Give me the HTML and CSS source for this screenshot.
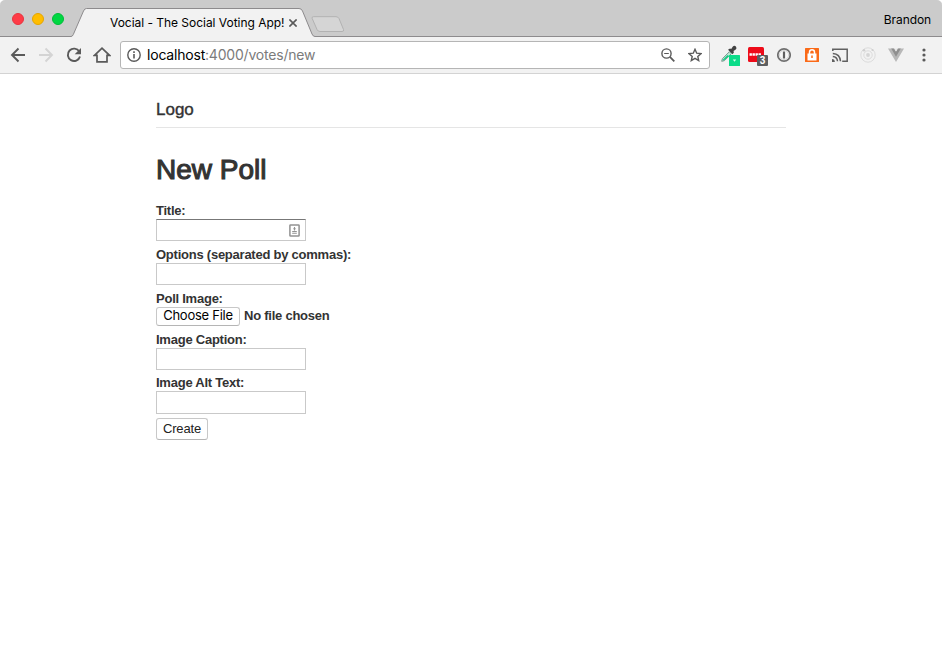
FILE: index.html
```html
<!DOCTYPE html>
<html lang="en">
<head>
<meta charset="utf-8">
<title>Vocial - The Social Voting App!</title>
<link rel="stylesheet" href="styles.css">
</head>
<body>
<div class="window">
  <header class="tabstrip">
    <div class="lights"><i class="light red"></i><i class="light amber"></i><i class="light green"></i></div>
    <div class="tab">
      <svg class="tab-shape" width="246" height="37" viewBox="0 0 246 37"><path d="M0 37V36.500Q1.500 36.500 2.300 34.500L12.500 11Q13.500 8.500 15.500 8.500H228Q230.500 8.500 231.500 11L241 34Q242 36.500 244 36.500V37Z" fill="#f2f2f2"/><path d="M0 36.500Q1.500 36.500 2.300 34.500L12.500 11Q13.500 8.500 15.500 8.500H228Q230.500 8.500 231.500 11L241 34Q242 36.500 244 36.500" fill="none" stroke="#8d8b8d"/></svg>
      <span class="tab-title">Vocial - The Social Voting App!</span>
      <svg class="tab-close" width="8" height="8" viewBox="0 0 8 8"><path d="M.4.4 7.600 7.600M7.600.4.4 7.600" stroke="#5a5a5a" stroke-width="1.600"/></svg>
    </div>
    <svg class="new-tab" width="34" height="17" viewBox="0 0 34 17"><path d="M2.500.7H25Q27 .7 28 2.500L32.500 13.500Q33.300 15.500 31 15.500H9Q7 15.500 6 13.500L1.200 2.500Q.5.7 2.500.7Z" fill="#d5d5d5" stroke="#b2b2b2"/></svg>
    <span class="profile">Brandon</span>
  </header>
  <nav class="toolbar">
    <div class="nav-icons">
      <svg width="16" height="16" viewBox="0 0 16 16"><path d="M15 8H2.500M8.500 1.500 2 8l6.500 6.500" fill="none" stroke="#5a5a5a" stroke-width="1.900"/></svg>
      <svg width="16" height="16" viewBox="0 0 16 16"><path d="M1 8h12.500M7.500 1.500 14 8l-6.500 6.500" fill="none" stroke="#d4d4d4" stroke-width="1.900"/></svg>
      <svg width="16" height="16" viewBox="0 0 16 16"><path d="M13.300 4.500A6.200 6.200 0 1 0 14 9.500" fill="none" stroke="#5a5a5a" stroke-width="1.900"/><path d="M15 1v6.300H8.700Z" fill="#5a5a5a"/></svg>
      <svg width="18" height="16" viewBox="0 0 18 16"><path d="M1.500 8.300 9 1.200l7.500 7.100H14v6.500H4V8.300Z" fill="none" stroke="#5a5a5a" stroke-width="1.700"/></svg>
    </div>
    <div class="address">
      <svg width="14" height="14" viewBox="0 0 14 14"><circle cx="7" cy="7" r="6.200" fill="none" stroke="#5a5a5a" stroke-width="1.400"/><path d="M7 6v4.500M7 3.300v1.600" stroke="#5a5a5a" stroke-width="1.600"/></svg>
      <span class="url"><b>localhost</b>:4000/votes/new</span>
      <svg class="magnifier" width="14" height="14" viewBox="0 0 14 14"><circle cx="5.500" cy="5.500" r="4.600" fill="none" stroke="#5a5a5a" stroke-width="1.400"/><path d="M3.200 5.500h4.600" stroke="#5a5a5a"/><path d="m8.900 8.900 4.400 4.400" stroke="#5a5a5a" stroke-width="1.800"/></svg>
      <svg width="14" height="14" viewBox="0 0 14 14"><path d="m7 1.300 1.700 3.900 4.300.4-3.200 2.800.9 4.200L7 10.400l-3.700 2.200.9-4.200L1 5.600l4.300-.4Z" fill="none" stroke="#5a5a5a" stroke-width="1.400"/></svg>
    </div>
    <div class="extensions">
      <svg width="20" height="22" viewBox="0 0 20 22"><path d="m1.700 16.300.7-2.600 7-7 2 2-7 7Z" fill="#bfe9d7" stroke="#7c9790"/><path d="m2.500 15 5-5 1.500 1-5.200 4.600Z" fill="#12ce86"/><path d="m8 4.700 2-1.300 1.200.6 1.500-2.200q1.500-1.800 3.200-.3 1.500 1.800-.4 3.200l-2 1.400.4 1.400-1.300 1.800Z" fill="#424242"/><rect x="9" y="10" width="11" height="11" rx=".5" fill="#0bdc89"/><path d="M12.800 14.500h3.400l-1.700 2.300Z" fill="#d5ffed"/></svg>
      <svg class="ext-red" width="20" height="22" viewBox="0 0 20 22"><rect y="2" width="16" height="15" rx="1.500" fill="#ed0b19"/><path d="M1.500 9.500h12" stroke="#fff" stroke-width="2.400" stroke-dasharray="2.400 .6"/><rect x="9" y="10" width="11" height="11" rx="1" fill="#5c5e60"/><text class="badge-text" x="11.700" y="19.300">3</text></svg>
      <svg class="ext-key" width="14" height="22" viewBox="0 0 14 22"><circle cx="7" cy="10" r="6.200" fill="#f8f8f8" stroke="#707070" stroke-width="1.700"/><circle cx="7" cy="10" r="4.600" fill="none" stroke="#d7d7d7"/><path d="M7 6.500v7" stroke="#606060" stroke-width="2.200"/></svg>
      <svg class="ext-lock" width="14" height="22" viewBox="0 0 14 22"><rect y="3" width="14" height="14" rx=".5" fill="#fa6a18"/><path d="M4.500 9V7.200a2.500 2.500 0 0 1 5 0V9" fill="none" stroke="#fff" stroke-width="1.500"/><rect x="2.500" y="8.500" width="9" height="7" fill="#fff"/><path d="M7 10.500v2.500" stroke="#fa6a18" stroke-width="1.500"/></svg>
      <svg class="ext-cast" width="16" height="22" viewBox="0 0 16 22"><path d="M.8 6V4.300h14.400v11.900h-5M.8 8.500q7.200.5 7.700 7.700M.8 11.500q4.400.3 4.700 4.700" fill="none" stroke="#606060" stroke-width="1.500"/><path d="M0 14q2.800 0 2.800 3H0Z" fill="#606060"/></svg>
      <svg class="ext-faded" width="16" height="22" viewBox="0 0 16 22"><g fill="none" stroke="#dcdcdc"><circle cx="8" cy="10" r="7.200"/><circle cx="8" cy="10" r="4.200"/></g><circle cx="8" cy="10" r="1.900" fill="#d5d5d5"/><circle cx="4" cy="5.300" r="1.300" fill="#cfcfcf"/><circle cx="12.500" cy="5" r="1.100" fill="#cfcfcf"/></svg>
      <svg class="ext-faded" width="16" height="22" viewBox="0 0 16 22"><path d="M0 3.500h5.500L8 7.500l2.500-4H16L8 17Z" fill="#b8b8b8"/><path d="M3.200 3.500h3L8 6.500l1.800-3h3L8 11.700Z" fill="#8f8f8f"/><path d="M6.200 3.500h3.600L8 6.500Z" fill="#e7e7e7"/></svg>
      <svg class="menu" width="4" height="22" viewBox="0 0 4 22"><g fill="#5a5a5a"><circle cx="2" cy="5" r="1.600"/><circle cx="2" cy="10" r="1.600"/><circle cx="2" cy="15" r="1.600"/></g></svg>
    </div>
  </nav>
  <main class="page">
    <div class="site-header">Logo</div>
    <h1>New Poll</h1>
    <form>
      <label class="field title-field">Title:<span class="input"><svg width="11" height="13" viewBox="0 0 11 13"><rect x=".9" y=".9" width="9.200" height="11.200" rx=".7" fill="#fff" stroke="#929292" stroke-width="1.500"/><path d="M5.500 3v3.500M4.300 4.700h2.400M3.200 7.500h4.600M3.200 9.300h4.600" stroke="#929292" stroke-width="1.100"/></svg></span></label>
      <label class="field">Options (separated by commas):<span class="input"></span></label>
      <div class="field file-field">Poll Image:<div class="file-row"><button type="button" class="file-button">Choose File</button><span>No file chosen</span></div></div>
      <label class="field caption-field">Image Caption:<span class="input"></span></label>
      <label class="field alt-field">Image Alt Text:<span class="input"></span></label>
      <button type="button" class="create">Create</button>
    </form>
  </main>
</div>
</body>
</html>
```

FILE: styles.css
```css
* { box-sizing: border-box; }
body { margin: 0; background: #fff; font-family: "Liberation Sans", Arial, sans-serif; color: #333; }
svg { display: block; flex: none; }
.window { width: 942px; height: 667px; overflow: hidden; background: #fff; }
.tabstrip { display: flex; height: 37px; background: #cbcbcb; border-radius: 5px 5px 0 0; box-shadow: inset 0 -1px #8d8b8d; font-family: Inter, Roboto, sans-serif; font-size: 12px; color: #000; }
.lights { display: flex; gap: 8px; padding: 13px 0 0 12px; width: 71px; }
.light { width: 12px; height: 12px; border-radius: 50%; border: 1px solid; }
.red { background: #ff3b47; border-color: #e7343f; }
.amber { background: #ffbd00; border-color: #e5a500; }
.green { background: #00d742; border-color: #00bc38; }
.tab { position: relative; display: flex; width: 246px; height: 37px; padding-left: 39px; }
.tab-shape { position: absolute; left: 0; top: 0; }
.tab-title { position: relative; width: 175px; margin-top: 15px; line-height: 16px; letter-spacing: -.03px; white-space: nowrap; }
.tab-close { position: relative; margin: 19px 0 0 4px; }
.new-tab { margin: 16px 0 0 -6px; }
.profile { margin: 12px 11px 0 auto; line-height: 16px; letter-spacing: -.1px; }
.toolbar { display: flex; height: 37px; padding: 4px 16px 0 10px; background: #f2f2f2; border-bottom: 1px solid #d3d3d3; }
.nav-icons { display: flex; gap: 12px; width: 110px; padding-top: 6px; }
.nav-icons svg:last-child { margin-left: -1px; }
.address { display: flex; align-items: center; width: 590px; height: 28px; padding: 0 7px 0 6px; background: #fff; border: 1px solid #b5b5b5; border-radius: 3px; }
.url { margin-left: 6px; font: 14px/18px Inter, Roboto, sans-serif; letter-spacing: -.2px; color: #7b7b7b; white-space: nowrap; }
.url b { font-weight: 400; color: #000; }
.magnifier { margin: 0 13px 0 auto; }
.extensions { display: flex; flex: 1; padding: 4px 0 0 10px; }
.ext-red { margin-left: 8px; }
.ext-key { margin-left: 9px; }
.ext-lock { margin-left: 14px; }
.ext-cast { margin-left: 13px; }
.ext-faded { margin-left: 12px; }
.menu { margin-left: 18px; }
.badge-text { font: bold 10px "Liberation Sans", sans-serif; fill: #fff; }
.page { width: 630px; margin-left: 156px; padding-top: 24px; }
.site-header { height: 30px; line-height: 24px; border-bottom: 1px solid #e5e5e5; font-size: 17px; -webkit-text-stroke: .4px #333; }
h1 { margin: 24px 0 0; height: 51px; font-size: 28px; font-weight: 400; line-height: 36px; letter-spacing: 0; -webkit-text-stroke: 1.1px #333; }
.field { display: block; height: 44px; font-size: 13px; line-height: 16px; font-weight: 700; letter-spacing: -.24px; }
.input { display: block; width: 150px; height: 22px; border: 1px solid #c9c9c9; background: #fff; }
.title-field .input { border-top-color: #777; }
.input svg { margin: 4px 0 0 132px; }
.file-field { height: 41px; }
.file-row { display: flex; gap: 4px; line-height: 17px; }
button { display: block; background: #fff; border: 1px solid #c8c8c8; border-bottom-color: #b5b5b5; border-radius: 3px; padding: 0; color: #222; text-align: center; white-space: nowrap; }
.file-button { width: 84px; height: 19px; padding-bottom: 2px; font: 13px/15px Inter, sans-serif; letter-spacing: -.25px; color: #000; }
.caption-field { height: 43px; }
.alt-field { height: 43px; }
.alt-field .input { height: 23px; }
.create { width: 52px; height: 22px; padding-bottom: 1px; font: 13px/19px "Liberation Sans", sans-serif; letter-spacing: -.15px; }
```
